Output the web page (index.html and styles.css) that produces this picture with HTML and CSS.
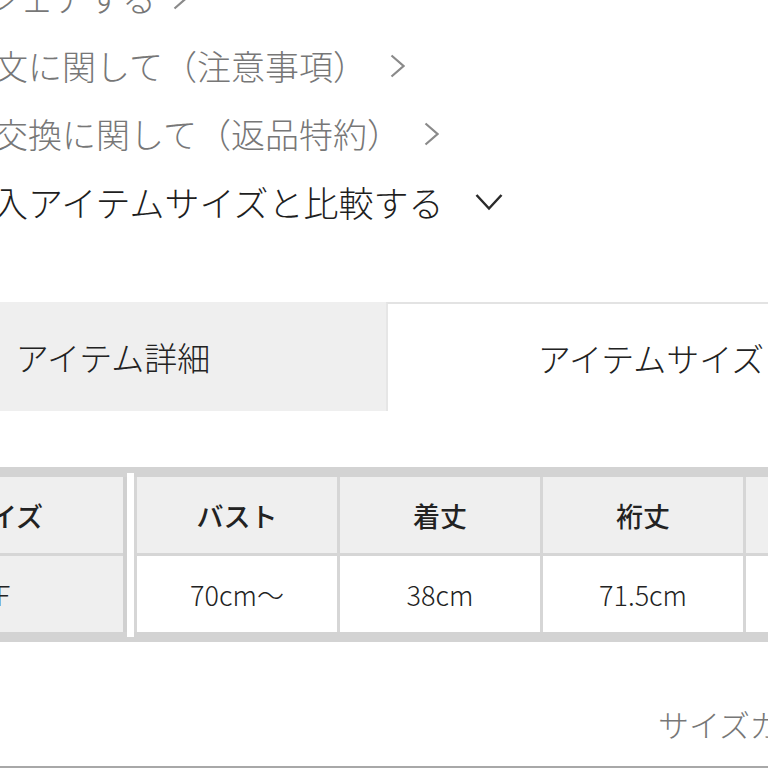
FILE: index.html
```html
<!DOCTYPE html>
<html lang="ja">
<head>
<meta charset="utf-8">
<title>アイテムサイズ</title>
<link rel="stylesheet" href="styles.css">
</head>
<body>
<div class="page">
  <ul class="links">
    <li class="link link-share"><span>シェアする</span>
      <svg class="chev-right" width="15" height="24" viewBox="0 0 15 24"><path d="M1.5 1.5 L13.5 12 L1.5 22.5"/></svg>
    </li>
    <li class="link"><span>ご注文に関して（注意事項）</span>
      <svg class="chev-right" width="15" height="24" viewBox="0 0 15 24"><path d="M1.5 1.5 L13.5 12 L1.5 22.5"/></svg>
    </li>
    <li class="link"><span>返品交換に関して（返品特約）</span>
      <svg class="chev-right" width="15" height="24" viewBox="0 0 15 24"><path d="M1.5 1.5 L13.5 12 L1.5 22.5"/></svg>
    </li>
    <li class="link link-compare"><span>購入アイテムサイズと比較する</span>
      <svg class="chev-down" width="28" height="18" viewBox="0 0 28 18"><path d="M1.5 2 L14 15.5 L26.5 2"/></svg>
    </li>
  </ul>

  <div class="tabs">
    <div class="tab tab-detail">アイテム詳細</div>
    <div class="tab tab-active">アイテムサイズ</div>
  </div>

  <div class="size-table">
    <div class="fixed-col">
      <div class="cell head">サイズ</div>
      <div class="cell body-cell">F</div>
    </div>
    <div class="spacer"></div>
    <div class="scroll-cols">
      <div class="col">
        <div class="cell head">バスト</div>
        <div class="cell body-cell">70cm〜</div>
      </div>
      <div class="col">
        <div class="cell head">着丈</div>
        <div class="cell body-cell">38cm</div>
      </div>
      <div class="col">
        <div class="cell head">裄丈</div>
        <div class="cell body-cell">71.5cm</div>
      </div>
      <div class="col">
        <div class="cell head">袖丈</div>
        <div class="cell body-cell">55cm</div>
      </div>
    </div>
  </div>

  <div class="guide">サイズガイド</div>
  <div class="bottom-rule"></div>
</div>
</body>
</html>
```
FILE: styles.css
```css
html, body {
  margin: 0;
  padding: 0;
  background: #ffffff;
}
body {
  width: 768px;
  height: 768px;
  overflow: hidden;
  font-family: "Noto Sans CJK JP", "Noto Sans", sans-serif;
  font-weight: 300;
  color: #222222;
}
.page {
  width: 768px;
  height: 768px;
  overflow: hidden;
  position: relative;
}
.links {
  list-style: none;
  margin: -36px 0 0 -74px;
  padding: 0;
}
.link {
  display: flex;
  align-items: center;
  height: 68px;
  font-size: 34px;
  color: #777777;
  white-space: nowrap;
}
.link span {
  line-height: 68px;
}
.link-share {
  padding-left: 60px;
}
.link-compare {
  padding-left: 32px;
  font-size: 35px;
  color: #1e1e1e;
}
.chev-right {
  margin-left: 23px;
  flex: none;
}
.chev-right path {
  fill: none;
  stroke: #8a8a8a;
  stroke-width: 2.2;
}
.link-share .chev-right {
  margin-left: 17px;
}
.chev-down {
  margin-left: 32px;
  flex: none;
}
.chev-down path {
  fill: none;
  stroke: #2a2a2a;
  stroke-width: 2.5;
}
.tabs {
  display: flex;
  margin: 66px 0 0 -160px;
  height: 109px;
}
.tab {
  flex: none;
  height: 109px;
  box-sizing: border-box;
  display: flex;
  align-items: center;
  justify-content: center;
  font-size: 33px;
  color: #222222;
  background: #efefef;
  white-space: nowrap;
}
.tab-detail {
  width: 546px;
}
.tab-active {
  width: 528px;
  background: #ffffff;
  border-top: 2px solid #e3e3e3;
  border-left: 2px solid #e6e6e6;
}
.size-table {
  display: flex;
  margin: 56px 0 0 -117px;
  border-top: 10px solid #d3d3d3;
  border-bottom: 10px solid #d3d3d3;
  width: 1200px;
}
.fixed-col {
  flex: none;
  width: 240px;
  border-right: 4px solid #d0d0d0;
}
.spacer {
  flex: none;
  width: 7px;
  background: #ffffff;
  margin: -4px 0 -5px 0;
}
.scroll-cols {
  display: flex;
}
.col {
  flex: none;
  width: 200px;
  border-left: 3px solid #d6d6d6;
}
.cell {
  height: 76px;
  display: flex;
  align-items: center;
  justify-content: center;
  font-size: 27px;
  color: #222222;
  white-space: nowrap;
}
.head {
  background: #efefef;
  font-weight: 500;
  border-bottom: 3px solid #d6d6d6;
}
.body-cell {
  background: #ffffff;
}
.fixed-col .cell {
  background: #efefef;
}
.guide {
  margin: 62px 0 0 658px;
  height: 40px;
  line-height: 40px;
  font-size: 31px;
  color: #777777;
  white-space: nowrap;
}
.bottom-rule {
  margin-top: 22px;
  height: 2px;
  background: #a8a8a8;
}
```
